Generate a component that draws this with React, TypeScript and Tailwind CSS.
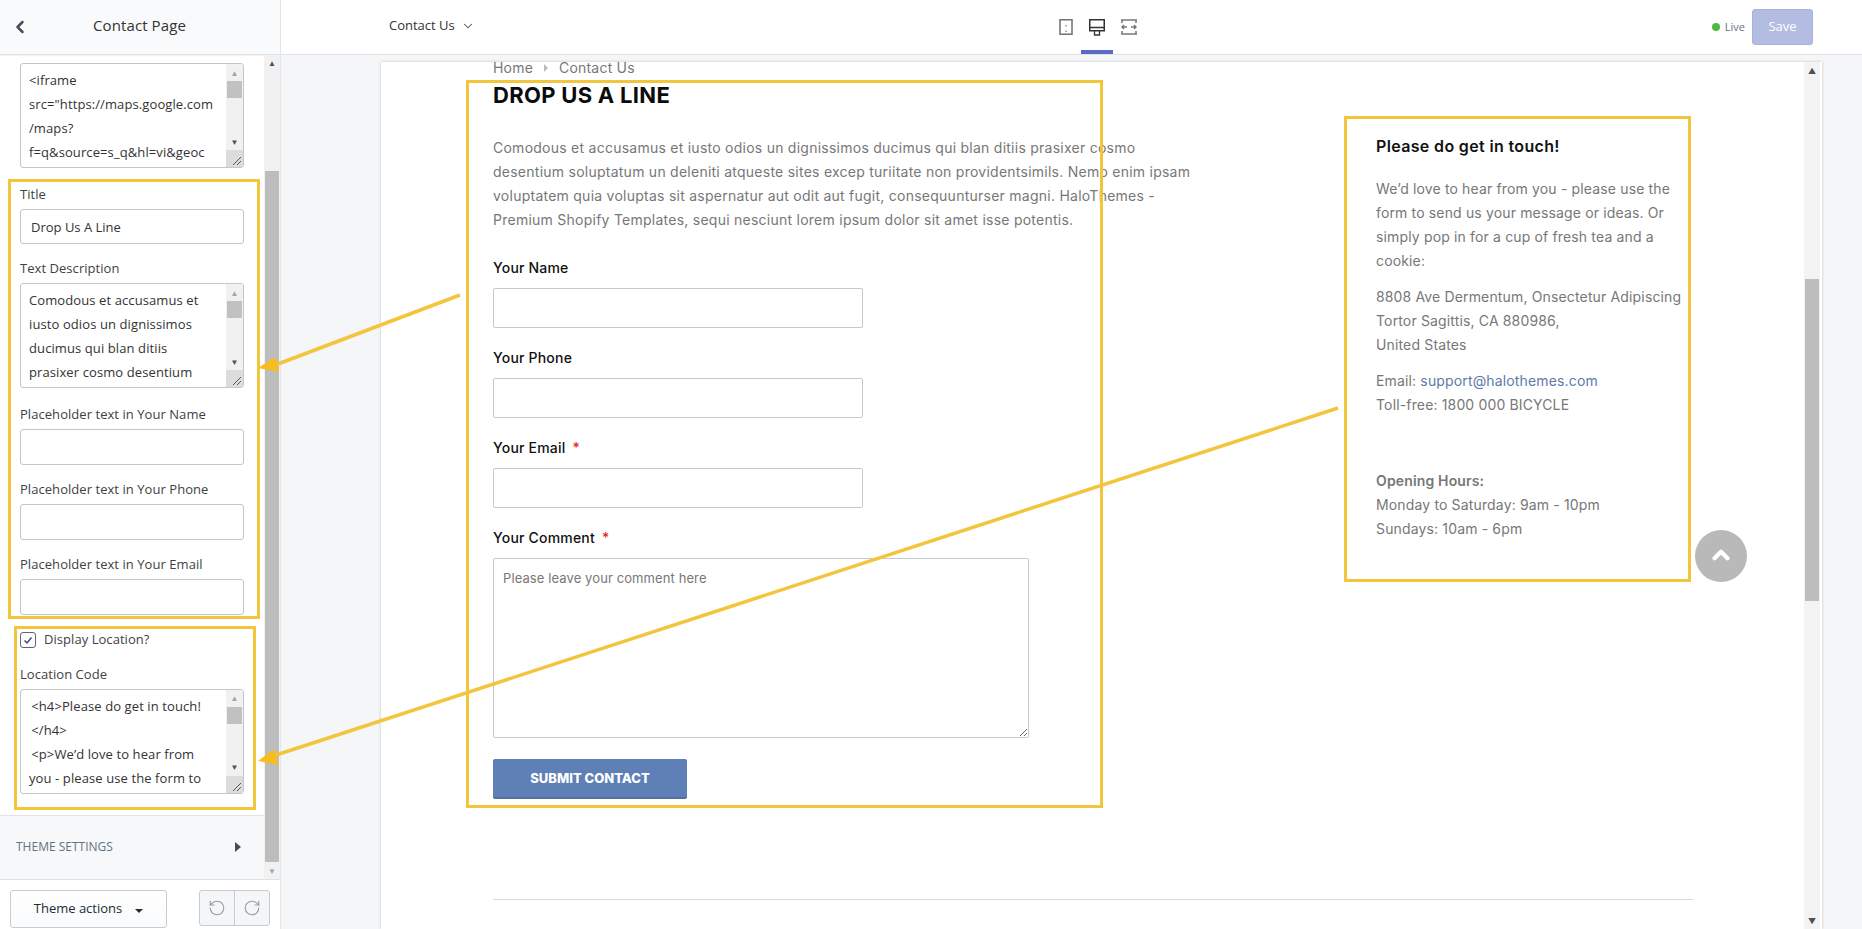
import React from 'react';
import { ChevronDown, ChevronLeft, ChevronUp, RotateCcw, RotateCw } from 'lucide-react';

const inputClass = 'block w-full rounded-[3px] border border-[#c4c6c8] bg-white px-[10px] text-[13px] text-[#333] outline-none';

const Grip = () => (
    <svg viewBox="0 0 17 17" className="h-[17px] w-[17px] bg-[#dcdcdc]">
        <path d="M7 15 15 7M11 15 15 11" stroke="#555" strokeWidth="1" fill="none" />
    </svg>
);

// textarea of the theme editor, with its classic scrollbar
const CodeBox = ({ lines }: { lines: string[] }) => (
    <div className="flex h-[105px] w-full overflow-hidden rounded-[3px] border border-[#c4c6c8] bg-white">
        <div className="min-w-0 flex-1 overflow-hidden whitespace-pre px-[8px] pt-[4px] text-[13px] leading-[24px] tracking-[0.1px] text-[#333]">
            {lines.map((line) => (
                <div key={line}>{line}</div>
            ))}
        </div>
        <div className="flex w-[17px] flex-shrink-0 flex-col bg-[#f1f1f1]">
            <div className="flex h-[17px] items-center justify-center text-[8px] leading-none text-[#a3a3a3]">▲</div>
            <div className="mx-[1px] h-[17px] bg-[#c1c1c1]" />
            <div className="flex-1" />
            <div className="flex h-[17px] items-center justify-center text-[8px] leading-none text-[#505050]">▼</div>
            <Grip />
        </div>
    </div>
);

const SideLabel = ({ children }: { children: React.ReactNode }) => (
    <div className="mb-[6px] text-[13px] leading-[18px] tracking-[0.05px] text-[#3d4246]">{children}</div>
);

const Sidebar = () => (
    <aside className="flex h-[929px] w-[281px] flex-shrink-0 flex-col border-r border-[#e3e5e7] bg-white font-['Open_Sans',sans-serif]">
        <div className="flex h-[55px] flex-shrink-0 items-center border-b border-[#dfe3e8] bg-[#f9fafb] pl-[10px] pr-[36px] shadow-[0_1px_1px_rgba(0,0,0,0.05)]">
            <ChevronLeft className="h-[20px] w-[20px] text-[#454f5b]" strokeWidth={3} />
            <h1 className="-mt-[3px] flex-1 pl-[5px] text-center text-[15px] font-medium tracking-[0.1px] text-[#333]">Contact Page</h1>
        </div>

        <div className="relative flex min-h-0 flex-1">
            <div className="min-w-0 flex-1 overflow-hidden">
                <div className="px-[20px] pt-[8px]">
                    <CodeBox lines={['<iframe', 'src="https://maps.google.com', '/maps?', 'f=q&source=s_q&hl=vi&geoc']} />
                    <div className="mt-[17px]">
                        <SideLabel>Title</SideLabel>
                        <input className={`${inputClass} h-[35px]`} defaultValue="Drop Us A Line" readOnly />
                    </div>
                    <div className="mt-[15px]">
                        <SideLabel>Text Description</SideLabel>
                        <CodeBox lines={['Comodous et accusamus et', 'iusto odios un dignissimos', 'ducimus qui blan ditiis', 'prasixer cosmo desentium']} />
                    </div>
                    {['Your Name', 'Your Phone', 'Your Email'].map((name, i) => (
                        <div key={name} className={i === 0 ? 'mt-[17px]' : 'mt-[15px]'}>
                            <SideLabel>Placeholder text in {name}</SideLabel>
                            <input className={`${inputClass} h-[36px]`} readOnly />
                        </div>
                    ))}
                    <label className="mt-[15px] flex items-center text-[13px] tracking-[0.05px] text-[#3d4246]">
                        <span className="mr-[8px] flex h-[16px] w-[16px] items-center justify-center rounded-[3px] border border-[#5c6380]">
                            <svg viewBox="0 0 12 12" className="h-[12px] w-[12px]">
                                <path d="M2.5 6.5 5 9l4.5-5.5" fill="none" stroke="#43467f" strokeWidth="1.5" />
                            </svg>
                        </span>
                        Display Location?
                    </label>
                    <div className="mt-[15px]">
                        <SideLabel>Location Code</SideLabel>
                        <CodeBox lines={['\u2009<h4>Please do get in touch!', '\u2009</h4>', '\u2009<p>We’d love to hear from', 'you - please use the form to']} />
                    </div>
                </div>
                <div className="mt-[21px] flex h-[65px] items-center justify-between border-y border-[#dfe3e8] bg-[#f6f8f9] pl-[16px] pr-[23px]">
                    <span className="text-[12px] text-[#637381]">THEME SETTINGS</span>
                    <span className="h-0 w-0 border-y-[5px] border-l-[6px] border-y-transparent border-l-[#454f5b]" />
                </div>
            </div>

            {/* sidebar scrollbar */}
            <div className="flex w-[16px] flex-shrink-0 flex-col bg-[#f1f1f1]">
                <div className="flex h-[17px] items-center justify-center text-[8px] leading-none text-[#505050]">▲</div>
                <div className="mx-[1px] mt-[99px] h-[693px] bg-[#bdbdbd]" />
                <div className="flex-1" />
                <div className="flex h-[17px] items-center justify-center text-[8px] leading-none text-[#a3a3a3]">▼</div>
            </div>
        </div>

        <div className="flex h-[50px] flex-shrink-0 items-start justify-between border-t border-[#dfe3e8] px-[10px] pt-[10px]">
            <button className="flex h-[38px] w-[157px] items-center justify-center gap-[13px] rounded-[3px] border border-[#c4cdd5] bg-gradient-to-b from-white to-[#f9fafb] pb-[1px] text-[13px] text-[#212b36]">
                Theme actions
                <span className="mt-[5px] h-0 w-0 border-x-[4px] border-t-[4px] border-x-transparent border-t-[#212b36]" />
            </button>
            <div className="flex h-[36px] w-[71px] overflow-hidden rounded-[3px] border border-[#c4cdd5] bg-[#f4f6f8] text-[#919eab]">
                <span className="flex flex-1 items-center justify-center border-r border-[#c4cdd5]">
                    <RotateCcw className="h-[18px] w-[18px]" strokeWidth={1.5} />
                </span>
                <span className="flex flex-1 items-center justify-center">
                    <RotateCw className="h-[18px] w-[18px]" strokeWidth={1.5} />
                </span>
            </div>
        </div>
    </aside>
);

const TopBar = () => (
    <header className="relative flex h-[55px] flex-shrink-0 items-center justify-between border-b border-[#dfe3e8] bg-white pl-[108px] pr-[49px] font-['Open_Sans',sans-serif]">
        <div className="-mt-[3px] flex items-center gap-[6px] text-[13px] text-[#333]">
            Contact Us
            <ChevronDown className="h-[14px] w-[14px] text-[#454f5b]" strokeWidth={1.75} />
        </div>

        <div className="absolute left-[769px] top-0 flex h-[54px] items-start">
            {/* phone */}
            <div className="flex h-[54px] w-[31px] justify-center pt-[19px]">
                <svg viewBox="0 0 14 16" className="h-[16px] w-[14px]" fill="none" stroke="#777">
                    <rect x="1" y="0.75" width="12" height="14.5" strokeWidth="1.6" />
                    <path d="M7 6v1.5M7 11.5V13" strokeWidth="1.2" />
                </svg>
            </div>
            {/* desktop */}
            <div className="flex h-[54px] w-[32px] justify-center border-b-[4px] border-[#5c6ac4] pt-[19px]">
                <svg viewBox="0 0 16 17" className="h-[17px] w-[16px]" fill="none" stroke="#333">
                    <rect x="0.75" y="0.75" width="14.5" height="11" strokeWidth="1.5" />
                    <path d="M1 8.5h14" strokeWidth="1.5" />
                    <path d="M5.5 12v4h5v-4" strokeWidth="1.3" />
                </svg>
            </div>
            {/* full width */}
            <div className="flex h-[54px] w-[31px] justify-center pt-[19px]">
                <svg viewBox="0 0 16 16" className="h-[16px] w-[16px]" fill="none" stroke="#777" strokeWidth="1.5">
                    <path d="M0 1h16M0 15h16M1 1v3M15 1v3M1 12v3M15 12v3" />
                    <path d="M1 8h5M3 6 1 8l2 2M15 8h-5M13 6l2 2-2 2" />
                </svg>
            </div>
        </div>

        <div className="flex items-center">
            <span className="mr-[5px] h-[8px] w-[8px] rounded-full bg-[#50b83c]" />
            <span className="mr-[7px] text-[11px] text-[#637381]">Live</span>
            <button className="h-[36px] w-[61px] rounded-[3px] border border-[#a9b0dd] bg-[#b3bce1] text-[13px] text-white">Save</button>
        </div>
    </header>
);

const fieldLabel = 'mb-[10px] h-[20px] text-[14px] font-medium leading-[20px] tracking-[0.2px] text-[#111]';

const FormField = ({ label, required }: { label: string; required?: boolean }) => (
    <div className="mb-[20px]">
        <div className={fieldLabel}>
            {label}
            {required && <span className="ml-[7px] text-[#e02b27]">*</span>}
        </div>
        <input readOnly className="block h-[40px] w-[370px] rounded-[2px] border border-[#c8c8c8] bg-white" />
    </div>
);

const Preview = () => (
    <div className="min-h-0 flex-1 bg-[#f4f6f8] pl-[100px] pr-[40px] pt-[7px]">
        <div className="flex h-full bg-white font-['Inter',sans-serif] shadow-[0_0_3px_rgba(0,0,0,0.2)]">
            <div className="relative min-w-0 flex-1 pl-[112px] text-[#777]">
                <div className="-mt-[1px] flex h-[14px] items-center gap-[11px] text-[14px] leading-[14px] tracking-[0.2px] text-[#777]">
                    Home
                    <span className="h-0 w-0 border-y-[4px] border-l-[4px] border-y-transparent border-l-[#bbb]" />
                    Contact Us
                </div>
                <h2 className="mt-[6px] text-[22px] font-bold leading-[28px] tracking-[0.3px] text-[#0b0b0b]">DROP US A LINE</h2>

                <div className="mt-[27px] whitespace-pre text-[14px] leading-[24px] tracking-[0.25px]">
                    <div>Comodous et accusamus et iusto odios un dignissimos ducimus qui blan ditiis prasixer cosmo</div>
                    <div>desentium soluptatum un deleniti atqueste sites excep turiitate non providentsimils. Nemo enim ipsam</div>
                    <div>voluptatem quia voluptas sit aspernatur aut odit aut fugit, consequunturser magni. HaloThemes -</div>
                    <div>Premium Shopify Templates, sequi nesciunt lorem ipsum dolor sit amet isse potentis.</div>
                </div>

                <form className="mt-[26px]">
                    <FormField label="Your Name" />
                    <FormField label="Your Phone" />
                    <FormField label="Your Email" required />
                    <div className={fieldLabel}>
                        Your Comment<span className="ml-[7px] text-[#e02b27]">*</span>
                    </div>
                    <textarea
                        readOnly
                        placeholder="Please leave your comment here"
                        className="block h-[180px] w-[536px] rounded-[2px] border border-[#c8c8c8] bg-white px-[9px] py-[10px] text-[13px] tracking-[0.1px] outline-none placeholder:text-[#777]"
                    />
                    <button type="button" className="mt-[21px] h-[40px] w-[194px] rounded-[2px] border-b-2 border-[#566f9c] bg-[#5f7fb7] pt-[2px] text-[13px] font-extrabold text-white">
                        SUBMIT CONTACT
                    </button>
                </form>
                <div className="mr-[111px] mt-[100px] h-px bg-[#dcdcdc]" />

                {/* store contact column */}
                <div className="absolute left-[995px] top-[72px] w-[320px] text-[14px] leading-[24px] tracking-[0.15px]">
                    <h4 className="mb-[19px] text-[16px] font-semibold leading-[24px] tracking-[0.35px] text-[#111]">Please do get in touch!</h4>
                    <p className="mb-[12px]">
                        We’d love to hear from you - please use the<br />
                        form to send us your message or ideas. Or<br />
                        simply pop in for a cup of fresh tea and a<br />
                        cookie:
                    </p>
                    <p className="mb-[12px] whitespace-pre">
                        8808 Ave Dermentum, Onsectetur Adipiscing<br />
                        Tortor Sagittis, CA 880986,<br />
                        United States
                    </p>
                    <p className="mb-[52px]">
                        Email: <span className="text-[#5f7aa8]">support@halothemes.com</span><br />
                        Toll-free: 1800 000 BICYCLE
                    </p>
                    <p>
                        <span className="font-semibold">Opening Hours:</span><br />
                        Monday to Saturday: 9am - 10pm<br />
                        Sundays: 10am - 6pm
                    </p>
                </div>

                <div className="absolute left-[1314px] top-[468px] flex h-[52px] w-[52px] items-center justify-center rounded-full bg-[#b9b9b9]">
                    <ChevronUp className="-mt-[3px] h-[26px] w-[26px] text-white" strokeWidth={4} />
                </div>
            </div>

            <div className="mr-[2px] flex w-[16px] flex-shrink-0 flex-col bg-[#f3f3f3]">
                <div className="flex h-[17px] items-center justify-center text-[8px] leading-none text-[#505050]">▲</div>
                <div className="mx-[1px] mt-[200px] h-[322px] bg-[#bdbdbd]" />
                <div className="flex-1" />
                <div className="flex h-[17px] items-center justify-center text-[8px] leading-none text-[#505050]">▼</div>
            </div>
        </div>
    </div>
);

// yellow callouts drawn over the screenshot
const Callouts = () => (
    <>
        <div className="pointer-events-none absolute left-[8px] top-[179px] h-[440px] w-[252px] border-[3px] border-[#f3c53d]" />
        <div className="pointer-events-none absolute left-[14px] top-[626px] h-[184px] w-[242px] border-[3px] border-[#f3c53d]" />
        <div className="pointer-events-none absolute left-[466px] top-[80px] h-[728px] w-[637px] border-[3px] border-[#f3c53d]" />
        <div className="pointer-events-none absolute left-[1344px] top-[116px] h-[466px] w-[347px] border-[3px] border-[#f3c53d]" />
        <svg className="pointer-events-none absolute left-0 top-0 h-[929px] w-[1862px]" viewBox="0 0 1862 929">
            <path d="M460 295 270 367M1338 408 270 757" stroke="#f3c53d" strokeWidth="3.5" fill="none" />
            <path d="M258 368 275 357 279 372ZM258 761 274 749 279 765Z" fill="#f5bd1f" />
        </svg>
    </>
);

const App = () => (
    <div className="relative flex h-[929px] w-[1862px] overflow-hidden bg-white">
        <Sidebar />
        <main className="flex min-w-0 flex-1 flex-col">
            <TopBar />
            <Preview />
        </main>
        <Callouts />
    </div>
);

export default App;
